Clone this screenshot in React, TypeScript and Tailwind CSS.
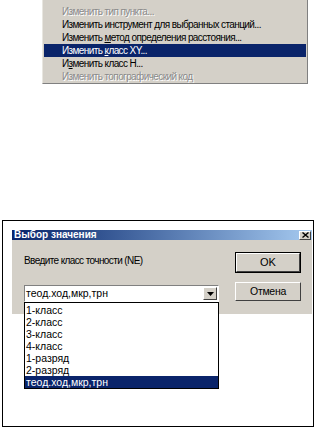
import React from 'react';

const menuItems = [
  { pre: 'Изменить тип пункта...', u: '', post: '', disabled: true },
  { pre: 'Изменить инструмент для выбранных станций...', u: '', post: '', disabled: false },
  { pre: 'Изменить ', u: 'м', post: 'етод определения расстояния...', disabled: false },
  { pre: 'Изменить ', u: 'к', post: 'ласс XY...', disabled: false, active: true },
  { pre: 'И', u: 'з', post: 'менить класс H...', disabled: false },
  { pre: 'Изменить топографический код', u: '', post: '', disabled: true },
];

const listItems = ['1-класс', '2-класс', '3-класс', '4-класс', '1-разряд', '2-разряд', 'теод.ход,мкр,трн'];

export default function App() {
  return (
    <div className="w-[314px] h-[427px] bg-white overflow-hidden font-['Liberation_Sans',Arial,sans-serif] text-black">
      {/* context menu */}
      <div className="ml-[42px] w-[266px] h-[84px] bg-[#d4d0c8] border-l border-l-[#e8e6e0] border-r border-r-[#808080] border-b border-b-[#808080] pt-[5px] flex flex-col">
        {menuItems.map((item, i) => (
          <div
            key={i}
            className={`h-[13px] mx-[1px] pl-[18px] flex items-center text-[10px] tracking-[-0.6px] leading-none whitespace-nowrap ${
              item.active ? 'bg-[#0a246a] text-white' : item.disabled ? 'text-[#8a8a8a] [text-shadow:1px_1px_0_#fff]' : 'text-black'
            }`}
          >
            <span>
              {item.pre}
              {item.u && <span className="underline underline-offset-1">{item.u}</span>}
              {item.post}
            </span>
          </div>
        ))}
      </div>

      {/* dialog in frame */}
      <div className="mt-[136px] ml-[2px] w-[312px] h-[207px] border border-black pt-[9px] pl-[9px]">
        <div className="w-[300px] relative">
          <div className="h-[10px] bg-gradient-to-r from-[#0a246a] to-[#a6caf0] flex items-center justify-between pl-[2px] pr-[1px]">
            <span className="text-white font-bold text-[10px] leading-none">Выбор значения</span>
            <div className="w-[12px] h-[9px] bg-[#d4d0c8] border border-t-white border-l-white border-r-[#404040] border-b-[#404040] flex items-center justify-center">
              <svg width="7" height="6" viewBox="0 0 7 6">
                <path d="M0.5 0.5 L6.5 5.5 M6.5 0.5 L0.5 5.5" stroke="#000" strokeWidth="1.4" />
              </svg>
            </div>
          </div>
          <div className="h-[74px] bg-[#d4d0c8] flex">
            <div className="w-[223px] pl-[12px] pt-[16px]">
              <div className="text-[10px] tracking-[-0.6px] leading-none h-[12px]">Введите класс точности (NE)</div>
              <div className="mt-[17px] w-[195px] h-[17px] bg-white border border-t-[#808080] border-l-[#808080] border-r-white border-b-white flex items-center justify-between">
                <span className="pl-[1px] text-[10.5px] leading-none">теод.ход,мкр,трн</span>
                <div className="w-[14px] h-[13px] mr-[1px] bg-[#d4d0c8] border border-t-white border-l-white border-r-[#404040] border-b-[#404040] flex items-center justify-center">
                  <svg width="7" height="4" viewBox="0 0 7 4">
                    <path d="M0 0 H7 L3.5 4 Z" fill="#000" />
                  </svg>
                </div>
              </div>
              <div className="w-[195px] h-[87px] bg-white border border-black relative z-10 flex flex-col pt-[1px]">
                {listItems.map((t, i) => (
                  <div
                    key={i}
                    className={`h-[12px] pl-[1px] flex items-center text-[10.5px] leading-none ${
                      i === listItems.length - 1 ? 'bg-[#0a246a] text-white' : ''
                    }`}
                  >
                    {t}
                  </div>
                ))}
              </div>
            </div>
            <div className="flex flex-col pt-[12px] gap-[9px]">
              <div className="w-[66px] h-[21px] border border-black">
                <div className="w-full h-full border border-t-white border-l-white border-r-[#404040] border-b-[#404040] flex items-center justify-center text-[11px] leading-none">
                  OK
                </div>
              </div>
              <div className="w-[66px] h-[19px] border border-t-white border-l-white border-r-[#404040] border-b-[#404040] flex items-center justify-center text-[10.5px] tracking-[-0.3px] leading-none">
                Отмена
              </div>
            </div>
          </div>
        </div>
      </div>
    </div>
  );
}
